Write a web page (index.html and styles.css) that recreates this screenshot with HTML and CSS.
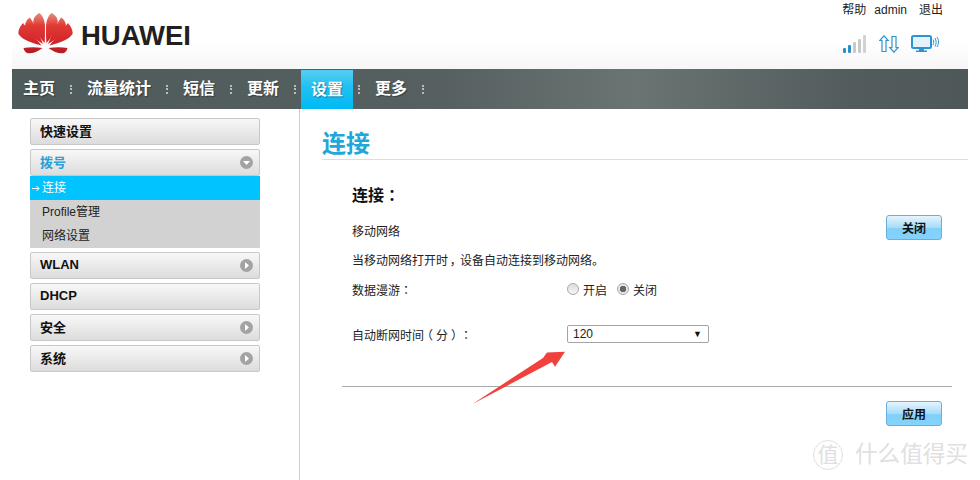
FILE: index.html
```html
<!DOCTYPE html>
<html lang="zh-CN">
<head>
  <meta charset="UTF-8" />
  <title>连接</title>
  <link rel="stylesheet" href="styles.css">
</head>
<body>
  <div class="page">
    <header class="top">
      <div class="logo">
        <svg class="logo-mark" width="55" height="41" viewBox="0 0 55 41">
          <defs>
            <linearGradient id="petal" gradientUnits="userSpaceOnUse" x1="0" y1="0" x2="0" y2="41">
              <stop offset="0" stop-color="#e98d7c"/>
              <stop offset="0.3" stop-color="#e13b35"/>
              <stop offset="0.75" stop-color="#d2232a"/>
              <stop offset="1" stop-color="#ad1c22"/>
            </linearGradient>
            <g id="petals" fill="url(#petal)">
              <path d="M26.600 30C20 23 15 14 15.300 8.500C15.600 4 18.500 1.500 21.500 0C25 3 27 8 27 14C27 20 27 25 26.600 30Z"/>
              <path d="M25 31C16 25.500 8.500 19 7.200 13.500C6.800 10 9 6 12 4.500C15 9 20 19 25 31Z"/>
              <path d="M23.500 32.500C14 30 4 27 0.500 21C-0.200 18 2 13 5 10C9 15 16 23 23.500 32.500Z"/>
              <path d="M24.500 35C19 39.500 13 41 9 40C7 39 6 37 5.500 35C11 34 18 34 24.500 35Z"/>
            </g>
          </defs>
          <use href="#petals"/>
          <use href="#petals" transform="matrix(-1 0 0 1 55 0)"/>
        </svg>
        <span class="logo-text">HUAWEI</span>
      </div>
      <div class="top-right">
        <div class="user-links">
          <span>帮助</span>
          <span class="user-name">admin</span>
          <span>退出</span>
        </div>
        <div class="status-icons">
          <svg width="24" height="18" viewBox="0 0 24 18">
            <rect x="0" y="13" width="3" height="5" rx="1" fill="#2a8fc8"/>
            <rect x="5" y="10" width="3" height="8" rx="1" fill="#2a8fc8"/>
            <rect x="10" y="7" width="3" height="11" rx="1" fill="#c9c9c9"/>
            <rect x="15" y="4" width="3" height="14" rx="1" fill="#c9c9c9"/>
            <rect x="20" y="0" width="3" height="18" rx="1" fill="#d2d2d2"/>
          </svg>
          <svg width="20" height="18" viewBox="0 0 20 18" fill="#fff" stroke="#2a95d0" stroke-width="1.200">
            <path d="M5 0.800L9.200 5.500H7V16.500H3V5.500H0.800Z"/>
            <path d="M15 17.200L19.200 12.500H17V1.500H13V12.500H10.800Z"/>
          </svg>
          <svg width="28" height="18" viewBox="0 0 28 18">
            <rect x="1" y="1" width="19" height="12" rx="1.500" fill="#e3f2fb" stroke="#2a95d0" stroke-width="2"/>
            <path d="M8 14h5v1.500h3V17H5v-1.500h3z" fill="#2a95d0"/>
            <path d="M22 4.500c1 2 1 3.500 0 5.500M24 3c1.500 2.500 1.500 6 0 8.500M26 2c2 3 2 7 0 10" fill="none" stroke="#2a95d0" stroke-width="1"/>
          </svg>
        </div>
      </div>
    </header>

    <nav class="nav">
      <a class="nav-item">主页</a><i class="nav-sep"></i>
      <a class="nav-item">流量统计</a><i class="nav-sep"></i>
      <a class="nav-item">短信</a><i class="nav-sep"></i>
      <a class="nav-item">更新</a><i class="nav-sep"></i>
      <a class="nav-item active">设置</a><i class="nav-sep"></i>
      <a class="nav-item">更多</a><i class="nav-sep"></i>
    </nav>

    <div class="main">
      <aside class="side">
        <div class="side-btn">快速设置</div>
        <div class="side-group">
          <div class="side-btn open">拨号
            <svg class="arrow" width="13" height="13" viewBox="0 0 13 13"><circle cx="6.500" cy="6.500" r="6.500" fill="#a3a3a3"/><path d="M3 5h7L6.500 9z" fill="#fff"/></svg>
          </div>
          <ul class="sub">
            <li class="current">
              <svg class="sub-arrow" width="8" height="7" viewBox="0 0 8 7"><path d="M0 3.500H7M4.500 1L7 3.500L4.500 6" fill="none" stroke="#fff" stroke-width="1"/></svg>连接
            </li>
            <li>Profile管理</li>
            <li>网络设置</li>
          </ul>
        </div>
        <div class="side-btn">WLAN
          <svg class="arrow" width="13" height="13" viewBox="0 0 13 13"><circle cx="6.500" cy="6.500" r="6.500" fill="#a3a3a3"/><path d="M5 3v7l4-3.500z" fill="#fff"/></svg>
        </div>
        <div class="side-btn">DHCP</div>
        <div class="side-btn">安全
          <svg class="arrow" width="13" height="13" viewBox="0 0 13 13"><circle cx="6.500" cy="6.500" r="6.500" fill="#a3a3a3"/><path d="M5 3v7l4-3.500z" fill="#fff"/></svg>
        </div>
        <div class="side-btn">系统
          <svg class="arrow" width="13" height="13" viewBox="0 0 13 13"><circle cx="6.500" cy="6.500" r="6.500" fill="#a3a3a3"/><path d="M5 3v7l4-3.500z" fill="#fff"/></svg>
        </div>
      </aside>

      <section class="content">
        <h1 class="title">连接</h1>
        <div class="form">
          <h2 class="form-title">连接<span class="punct" lang="zh-TW">：</span></h2>
          <div class="row row-mobile">
            <span class="row-text">移动网络</span>
            <button class="btn">关闭</button>
          </div>
          <p class="hint">当移动网络打开时<span class="punct-comma">，</span>设备自动连接到移动网络。</p>
          <div class="row row-roam">
            <span class="label">数据漫游<span class="punct" lang="zh-TW">：</span></span>
            <span class="radios">
              <span class="radio"></span><span class="radio-text">开启</span>
              <span class="radio on"></span><span class="radio-text">关闭</span>
            </span>
          </div>
          <div class="row row-time">
            <span class="label">自动断网时间<span class="paren">（</span>分<span class="paren">）</span><span class="punct" lang="zh-TW">：</span></span>
            <span class="select">120<span class="caret">▼</span></span>
          </div>
        </div>
        <div class="actions">
          <button class="btn">应用</button>
        </div>
      </section>
    </div>

    <svg class="mark-arrow" width="100" height="60" viewBox="0 0 100 60">
      <path d="M0.500 56L71 10L75 4.500L93 3.700L83 18.700L80 14Z" fill="#f0413c"/>
    </svg>
    <div class="watermark">
      <span class="wm-circle">值</span>
      <span class="wm-text">什么值得买</span>
    </div>
  </div>
</body>
</html>
```

FILE: styles.css
```css
* {
  box-sizing: border-box;
}

body {
  margin: 0;
  background: #fff;
  font-family: "Liberation Sans", "Noto Sans CJK SC", sans-serif;
  font-size: 12px;
  color: #222;
}

.page {
  position: relative;
  width: 980px;
  height: 480px;
  overflow: hidden;
}

.top {
  display: flex;
  justify-content: space-between;
  height: 69px;
  margin-left: 12px;
  width: 956px;
  background: linear-gradient(#fff 60%, #f6f6f6);
}

.logo {
  display: flex;
  align-items: center;
  gap: 8px;
  padding: 0 0 2px 6px;
}

.logo-text {
  margin-top: 5px;
  font-size: 27.500px;
  font-weight: bold;
  color: #231f20;
}

.top-right {
  display: flex;
  flex-direction: column;
  align-items: flex-end;
  padding-right: 29px;
}

.user-links {
  display: flex;
  gap: 8px;
  height: 35px;
  padding-top: 2px;
  line-height: 16px;
  margin-right: -4px;
}

.user-name {
  margin-right: 4px;
}

.status-icons {
  display: flex;
  gap: 12px;
  align-items: center;
}

.nav {
  display: flex;
  align-items: center;
  height: 40px;
  margin-left: 12px;
  width: 956px;
  padding-left: 11px;
  background: linear-gradient(90deg, #4f5a5b, #566061 45%, #6a7472 65%, #525c5d 88%, #4f5859);
}

.nav-item {
  font-size: 16px;
  font-weight: bold;
  color: #fff;
  line-height: 40px;
  text-shadow: 1px 1px 1px rgba(0, 0, 0, 0.35);
}

.nav-item.active {
  align-self: flex-end;
  height: 39px;
  margin: 0 -10px;
  padding: 0 10px;
  line-height: 38px;
  border-top: 1px solid #4ec9ee;
  background: linear-gradient(#56cdf0, #22c1f2 40%, #00b9f5);
}

.nav-sep {
  width: 2px;
  height: 9px;
  margin: 0 15px;
  border-left: 2px dotted #bbb;
}

.main {
  display: flex;
  height: 371px;
}

.side {
  display: flex;
  flex-direction: column;
  gap: 4px;
  width: 300px;
  padding: 9px 39px 0 30px;
  border-right: 1px solid #ccc;
}

.side-btn {
  display: flex;
  align-items: center;
  justify-content: space-between;
  height: 27px;
  padding: 0 6px 2px 9px;
  border: 1px solid #c8c8c8;
  border-radius: 2px;
  background: linear-gradient(#f8f8f8, #dcdcdc);
  font-size: 13px;
  font-weight: bold;
  color: #111;
}

.side-btn.open {
  color: #2a9fd6;
}

.arrow {
  margin-top: 2px;
}

.sub {
  margin: 0;
  padding: 0;
  list-style: none;
  background: #d2d2d2;
}

.sub li {
  height: 24px;
  padding-left: 12px;
  line-height: 24px;
  color: #222;
}

.sub li.current {
  padding-left: 2px;
  background: #00c3ff;
  color: #fff;
}

.sub-arrow {
  margin-right: 2px;
}

.content {
  flex: 1;
  min-width: 0;
  padding-top: 20px;
}

.title {
  width: 646px;
  height: 31px;
  margin: 0 12px 0 22px;
  font-size: 24px;
  line-height: 30px;
  color: #1ea7d8;
  border-bottom: 1px solid #ddd;
}

.form {
  padding: 24px 38px 0 52px;
}

.form-title {
  margin: 0;
  font-size: 16px;
  line-height: 20px;
  font-weight: bold;
  color: #111;
}

/* centred full-width punctuation comes from the TC glyphs */
.punct {
  font-family: "Noto Sans CJK TC", sans-serif;
}

.paren {
  display: inline-block;
  width: 1em;
  text-align: center;
  font-feature-settings: "halt";
}

.punct-comma {
  margin: 0 -0.15em 0 0.15em;
}

.row {
  display: flex;
  align-items: center;
}

.row-mobile {
  justify-content: space-between;
  height: 25px;
  margin-top: 9px;
}

.row-text {
  padding-top: 5px;
}

.hint {
  margin: 13px 0 0;
  line-height: 16px;
}

.row-roam {
  margin-top: 13px;
  line-height: 16px;
}

.row-time {
  margin-top: 26px;
}

.label {
  width: 215px;
}

.radios {
  display: flex;
  align-items: center;
}

.radio {
  width: 12px;
  height: 12px;
  margin-top: -3px;
  border: 1px solid #aaa;
  border-radius: 50%;
  background: linear-gradient(#ddd, #f5f5f5);
}

.radio.on {
  background: radial-gradient(circle, #666 0 3px, #e6e6e6 3.500px);
}

.radio-text {
  margin: 0 10px 0 4px;
}

.select {
  display: flex;
  justify-content: space-between;
  align-items: center;
  width: 142px;
  height: 18px;
  padding: 0 6px 0 5px;
  border: 1px solid #a5a5a5;
  border-radius: 2px;
}

.caret {
  font-size: 9px;
  color: #111;
}

.btn {
  width: 56px;
  height: 25px;
  padding: 0;
  border: 1px solid #6aaedb;
  border-radius: 3px;
  background: linear-gradient(#e6f4fd, #a8dcf8 50%, #7fd0fb 55%, #85d3fb);
  font-family: inherit;
  font-size: 12px;
  font-weight: bold;
  color: #111;
}

.actions {
  display: flex;
  justify-content: flex-end;
  width: 610px;
  margin-left: 42px;
  margin-top: 43px;
  padding: 14px 10px 0 0;
  border-top: 1px solid #aaa;
}

.mark-arrow {
  position: absolute;
  left: 472px;
  top: 348px;
}

.watermark {
  position: absolute;
  left: 813px;
  top: 440px;
  display: flex;
  align-items: center;
  gap: 12px;
  color: #e0e0e0;
}

.wm-circle {
  width: 30px;
  height: 30px;
  border: 1px solid #e0e0e0;
  border-radius: 50%;
  font-size: 21px;
  line-height: 27px;
  text-align: center;
}

.wm-text {
  font-size: 22.600px;
  line-height: 28px;
}
```
